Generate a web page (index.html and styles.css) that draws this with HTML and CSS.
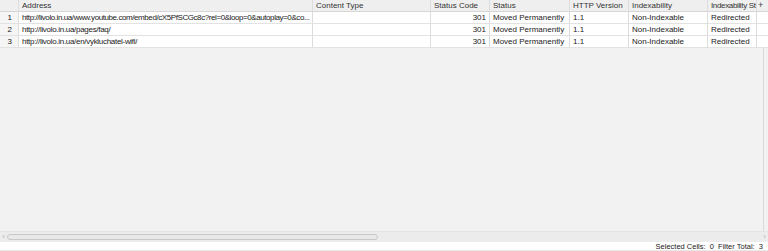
FILE: index.html
```html
<!DOCTYPE html>
<html>
<head>
<meta charset="utf-8">
<link rel="stylesheet" href="styles.css">
</head>
<body>
<div class="app">
  <div class="table">
    <div class="row head">
      <div class="c num"></div>
      <div class="c">Address</div>
      <div class="c">Content Type</div>
      <div class="c">Status Code</div>
      <div class="c">Status</div>
      <div class="c">HTTP Version</div>
      <div class="c">Indexability</div>
      <div class="c tight">Indexability St</div>
      <div class="c corner">+</div>
    </div>
    <div class="row">
      <div class="c num">1</div>
      <div class="c url long">http://livolo.in.ua/www.youtube.com/embed/cX5PfSCGc8c?rel=0&amp;loop=0&amp;autoplay=0&amp;co...</div>
      <div class="c"></div>
      <div class="c right">301</div>
      <div class="c">Moved Permanently</div>
      <div class="c">1.1</div>
      <div class="c">Non-Indexable</div>
      <div class="c">Redirected</div>
      <div class="c blank"></div>
    </div>
    <div class="row">
      <div class="c num">2</div>
      <div class="c url">http://livolo.in.ua/pages/faq/</div>
      <div class="c"></div>
      <div class="c right">301</div>
      <div class="c">Moved Permanently</div>
      <div class="c">1.1</div>
      <div class="c">Non-Indexable</div>
      <div class="c">Redirected</div>
      <div class="c blank"></div>
    </div>
    <div class="row">
      <div class="c num">3</div>
      <div class="c url">http://livolo.in.ua/en/vykluchatel-wifi/</div>
      <div class="c"></div>
      <div class="c right">301</div>
      <div class="c">Moved Permanently</div>
      <div class="c">1.1</div>
      <div class="c">Non-Indexable</div>
      <div class="c">Redirected</div>
      <div class="c blank"></div>
    </div>
    <div class="empty">
      <div class="fill"></div>
      <div class="vtrack"></div>
    </div>
  </div>
  <div class="hscroll">
    <span class="arrow">&#8249;</span>
    <div class="track"><div class="thumb"></div></div>
    <span class="arrow">&#8250;</span>
  </div>
  <div class="status">Selected Cells:&nbsp;&nbsp;0&nbsp;&nbsp;Filter Total:&nbsp;&nbsp;3</div>
  <div class="bottom"></div>
</div>
</body>
</html>
```
FILE: styles.css
```css
html, body {
  margin: 0;
  padding: 0;
  background: #f2f2f2;
}
.app {
  width: 768px;
  height: 251px;
  display: flex;
  flex-direction: column;
  font-family: "Liberation Sans", Arial, sans-serif;
  font-size: 8px;
  color: #222;
  overflow: hidden;
}
.table {
  flex: 1;
  display: flex;
  flex-direction: column;
  background: #f2f2f2;
  min-height: 0;
}
.row {
  display: grid;
  grid-template-columns: 19px 294px 118px 59px 80px 59px 79px 49px 1fr;
  height: 12px;
  background: #fff;
}
.row.head {
  background: #efefef;
}
.c {
  box-sizing: border-box;
  height: 12px;
  line-height: 11px;
  padding: 0 3px;
  border-right: 1px solid #dcdcdc;
  border-bottom: 1px solid #e2e2e2;
  white-space: nowrap;
  overflow: hidden;
}
.head .c {
  border-bottom: 1px solid #d6d6d6;
  color: #333;
}
.c.url {
  letter-spacing: -0.3px;
}
.c.url.long {
  letter-spacing: -0.42px;
}
.c.tight {
  letter-spacing: -0.35px;
  padding: 0 0 0 3px;
}
.c.num {
  background: #f5f5f5;
  text-align: right;
  padding-right: 6px;
}
.head .c.num {
  background: #efefef;
}
.c.right {
  text-align: right;
  padding-right: 3px;
}
.c.corner {
  border-right: none;
  padding: 0 0 0 1px;
  text-align: left;
  font-size: 9px;
  color: #444;
}
.c.blank {
  background: #fff;
  border-right: none;
}
.empty {
  flex: 1;
  display: flex;
}
.fill {
  flex: 1;
}
.vtrack {
  width: 4px;
  border-left: 1px solid #dadada;
  background: #f2f2f2;
}
.hscroll {
  height: 10px;
  display: flex;
  align-items: center;
  background: #ececec;
  border-top: 1px solid #e4e4e4;
}
.arrow {
  width: 7px;
  text-align: center;
  color: #b0b0b0;
  font-size: 8px;
  line-height: 8px;
}
.track {
  flex: 1;
  height: 6px;
}
.thumb {
  box-sizing: border-box;
  width: 371px;
  height: 6px;
  background: #e8e8e8;
  border: 1px solid #c8c8c8;
  border-radius: 3px;
}
.status {
  height: 8px;
  background: #fff;
  text-align: right;
  padding-right: 5px;
  line-height: 9px;
  font-size: 7.5px;
  color: #222;
}
.bottom {
  height: 1px;
  background: #e8e8e8;
}
```
